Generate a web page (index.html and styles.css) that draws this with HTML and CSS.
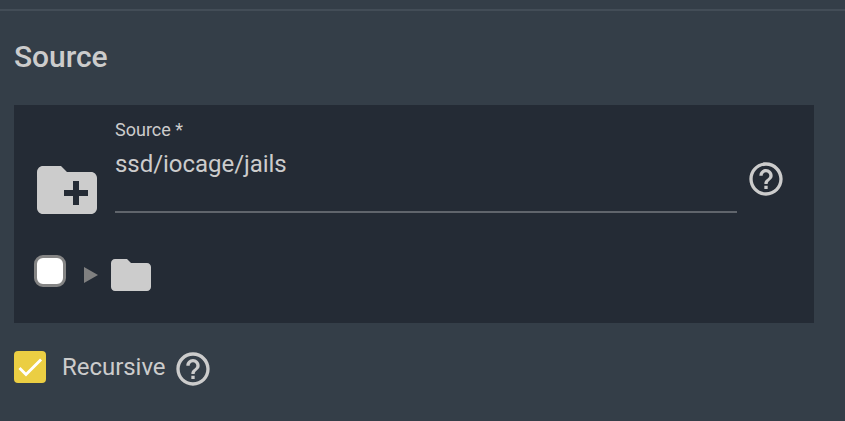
FILE: index.html
```
<!DOCTYPE html>
<html lang="en">
<head>
  <meta charset="UTF-8">
  <meta name="viewport" content="width=device-width, initial-scale=1.0">
  <title>Source</title>
  <link rel="stylesheet" href="styles.css">
</head>
<body>
  <form class="fieldset">
    <h2 class="title">Source</h2>

    <div class="explorer">
      <div class="explorer-row">
        <svg class="new-folder" viewBox="0 0 24 24"><path d="M20 6h-8l-2-2H4c-1.11 0-1.99.89-1.99 2L2 18c0 1.11.89 2 2 2h16c1.11 0 2-.89 2-2V8c0-1.11-.89-2-2-2zm-1 8h-3v3h-2v-3h-3v-2h3V9h2v3h3v2z"/></svg>
        <div class="field">
          <span class="field-label">Source *</span>
          <span class="field-value">ssd/iocage/jails</span>
        </div>
        <svg class="help" viewBox="0 0 24 24"><path d="M11 18h2v-2h-2v2zm1-16C6.48 2 2 6.48 2 12s4.48 10 10 10 10-4.48 10-10S17.52 2 12 2zm0 18c-4.41 0-8-3.59-8-8s3.59-8 8-8 8 3.59 8 8-3.59 8-8 8zm0-14c-2.21 0-4 1.79-4 4h2c0-1.1.9-2 2-2s2 .9 2 2c0 2-3 1.75-3 5h2c0-2.25 3-2.5 3-5 0-2.21-1.79-4-4-4z"/></svg>
      </div>
      <div class="tree-node">
        <span class="tree-checkbox"></span>
        <svg class="tree-arrow" viewBox="0 0 14 16"><path d="M0 0l14 8-14 8z"/></svg>
        <svg class="tree-folder" viewBox="0 0 24 24"><path d="M10 4H4c-1.1 0-1.99.9-1.99 2L2 18c0 1.1.9 2 2 2h16c1.1 0 2-.9 2-2V8c0-1.1-.9-2-2-2h-8l-2-2z"/></svg>
      </div>
    </div>

    <div class="option">
      <span class="checkbox">
        <svg viewBox="0 0 24 24"><path d="M4.1 12.7L9 17.6 20.3 6.3"/></svg>
      </span>
      <span class="option-label">Recursive</span>
      <svg class="help" viewBox="0 0 24 24"><path d="M11 18h2v-2h-2v2zm1-16C6.48 2 2 6.48 2 12s4.48 10 10 10 10-4.48 10-10S17.52 2 12 2zm0 18c-4.41 0-8-3.59-8-8s3.59-8 8-8 8 3.59 8 8-3.59 8-8 8zm0-14c-2.21 0-4 1.79-4 4h2c0-1.1.9-2 2-2s2 .9 2 2c0 2-3 1.75-3 5h2c0-2.25 3-2.5 3-5 0-2.21-1.79-4-4-4z"/></svg>
    </div>
  </form>
</body>
</html>
```
FILE: styles.css
```
* {
  box-sizing: border-box;
}
body {
  margin: 0;
  padding-top: 9px;
  height: 421px;
  overflow: hidden;
  font-family: Roboto, sans-serif;
  background-color: #343e48;
  color: #cccccc;
}
svg {
  display: block;
  flex: none;
  fill: #cccccc;
}
.fieldset {
  border-top: 2px solid #434d57;
  padding: 26px 31px 0 14px;
}
.title {
  margin: 0 0 28px;
  font-size: 30px;
  font-weight: 500;
  line-height: 40px;
  letter-spacing: -0.05px;
}
.explorer {
  height: 218px;
  padding: 12px 28px 0 17px;
  background-color: #242b35;
}
.explorer-row {
  display: flex;
  height: 96px;
}
.new-folder {
  width: 72px;
  height: 72px;
  margin-top: 37px;
}
.field {
  display: flex;
  flex-direction: column;
  flex: 1;
  margin: 0 9px 0 12px;
  border-bottom: 2px solid #60656c;
}
.field-label {
  font-size: 18px;
  line-height: 26px;
}
.field-value {
  margin-top: 5px;
  font-size: 24px;
  line-height: 32px;
  letter-spacing: -0.04px;
}
.help {
  width: 40px;
  height: 40px;
}
.explorer-row .help {
  margin-top: 42px;
}
.tree-node {
  display: flex;
  align-items: center;
  height: 48px;
  margin: 38px 0 0 3px;
}
.tree-checkbox {
  width: 32px;
  height: 32px;
  margin: -8px 18px 0 0;
  border: 3px solid #858585;
  border-radius: 9px;
  background-color: #ffffff;
}
.tree-arrow {
  width: 14px;
  height: 16px;
  fill: #808080;
}
.tree-folder {
  width: 48px;
  height: 48px;
  margin-left: 9px;
}
.option {
  display: flex;
  align-items: center;
  margin-top: 26px;
}
.checkbox {
  width: 32px;
  height: 32px;
  margin-top: -4px;
  border-radius: 4px;
  background-color: #ebce43;
}
.checkbox path {
  fill: none;
  stroke: #ffffff;
  stroke-width: 2.1333;
}
.option-label {
  width: 111px;
  margin: -5px 0 0 16px;
  font-size: 24px;
  line-height: 32px;
  letter-spacing: -0.04px;
}
```
